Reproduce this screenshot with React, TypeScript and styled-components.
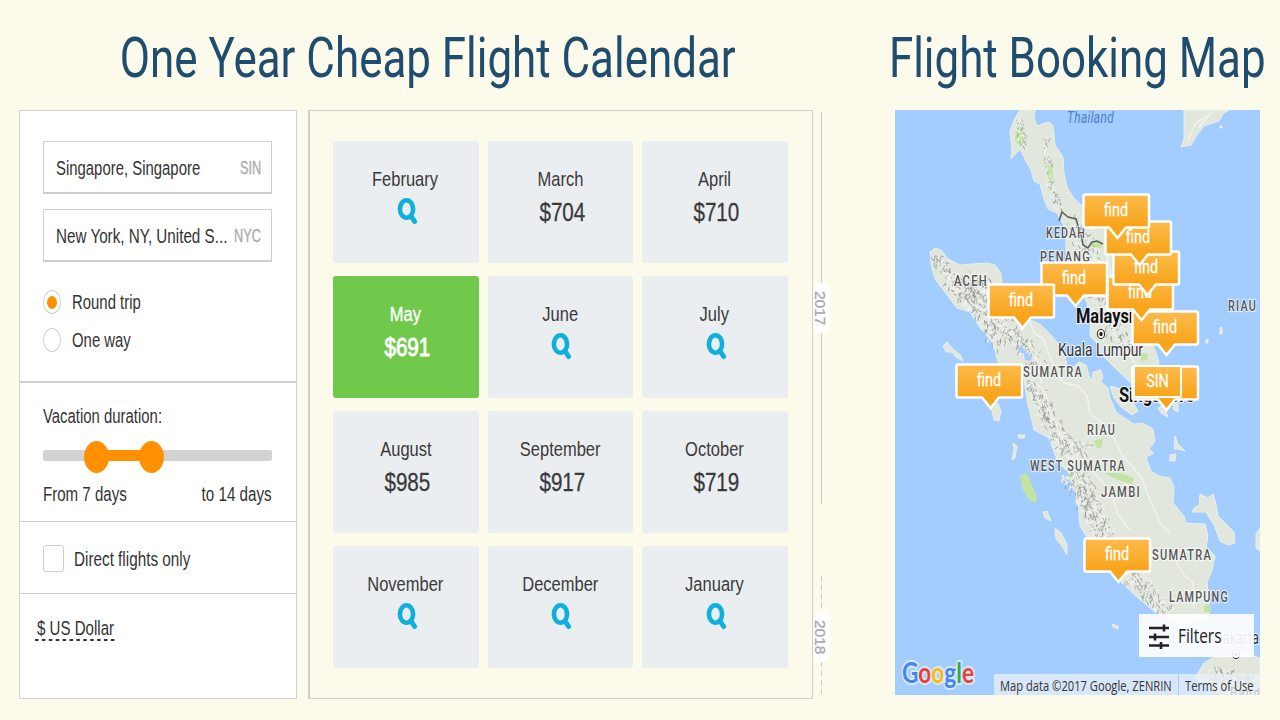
import * as React from "react";

import styled, { createGlobalStyle, css } from "styled-components";

const GlobalStyle = createGlobalStyle`
  body {
    margin: 0;
    background-color: #fcfaea;
    font-family: "Liberation Sans", Arial, sans-serif;
    color: #333;
  }

  * {
    box-sizing: border-box;
  }
`;

const Page = styled.div`
  display: flex;
  gap: 40px;
  width: 1280px;
  height: 720px;
  overflow: hidden;
  background-color: #fcfaea;
`;

const CalendarSection = styled.section`
  width: 855px;
`;

const MapSection = styled.section`
  width: 365px;
`;

const TitleBar = styled.header`
  display: flex;
  justify-content: center;
  height: 110px;
  padding-top: 25px;
`;

const Title = styled.h1`
  flex: none;
  margin: 0;
  font-family: Roboto, sans-serif;
  font-size: 56px;
  font-weight: 400;
  line-height: 66px;
  white-space: nowrap;
  color: #1f4d70;
  transform: scaleX(0.784);
`;

const Panels = styled.div`
  display: flex;
  height: 589px;
  padding-left: 19px;
`;

const SearchForm = styled.form`
  display: flex;
  flex-direction: column;
  width: 278px;
  margin-right: 11px;
  border: 1px solid #d2d2cf;
  background-color: #fff;
`;

const FormGroup = styled.div<{ $height?: number; $line?: number }>`
  ${(p) => (p.$height ? `height: ${p.$height}px;` : "flex: 1;")}
  padding: 0 24px 0 23px;
  border-bottom: ${(p) => p.$line || 0}px solid #cfcfcf;
`;

// narrow text: the glyphs are taller than they are wide
const Narrow = styled.span<{
  $from?: "left" | "center" | "right";
  $scale?: number;
}>`
  display: inline-block;
  font-size: 20.5px;
  line-height: 24px;
  white-space: nowrap;
  transform: scaleX(${(p) => p.$scale || 0.727});
  transform-origin: ${(p) => p.$from || "left"} center;
`;

const Fields = styled.div`
  padding: 30px 0 6px;
`;

const PlaceField = styled.div`
  display: flex;
  align-items: center;
  height: 53px;
  margin-bottom: 15px;
  padding: 1px 10px 0 12px;
  border: 1px solid #cfcfcf;
  border-bottom-width: 2px;
`;

const PlaceName = styled.div`
  flex: 1;
  width: 0;
`;

const PlaceCode = styled(Narrow)`
  flex: none;
  font-size: 17.5px;
  color: #aaa;
  -webkit-text-stroke: 0.3px;
`;

const RadioRow = styled.label`
  display: flex;
  align-items: center;
  gap: 11px;
  height: 38px;
`;

const Radio = styled.span`
  display: flex;
  align-items: center;
  justify-content: center;
  width: 18px;
  height: 24px;
  border: 1px solid #cfcfcf;
  border-radius: 50%;
`;

const RadioDot = styled.span`
  width: 10px;
  height: 13px;
  border-radius: 50%;
  background-color: #ff9000;
`;

const DurationLabel = styled(Narrow)`
  display: block;
  margin-top: 21px;
`;

const SliderTrack = styled.div`
  position: relative;
  height: 11px;
  margin: 22px 0 21px;
  border-radius: 2px;
  background-color: #d3d3d3;
`;

const SliderRange = styled.div`
  position: absolute;
  left: 53px;
  width: 56px;
  height: 11px;
  background-color: #ff9000;
`;

const SliderHandle = styled.div<{ $x: number }>`
  position: absolute;
  top: -9px;
  left: ${(p) => p.$x}px;
  width: 25px;
  height: 32px;
  border-radius: 50%;
  background-color: #ff9000;
`;

const Between = styled.div`
  display: flex;
  justify-content: space-between;
`;

const CheckRow = styled.label`
  display: flex;
  align-items: center;
  gap: 10px;
  height: 73px;
`;

const CheckBox = styled.span`
  width: 21px;
  height: 27px;
  border: 1px solid #cfcfcf;
  border-radius: 3px;
`;

const Currency = styled.div`
  width: 79px;
  height: 27px;
  margin: 22px 0 0 -8px;
`;

const CurrencyName = styled(Narrow)`
  margin-left: 2px;
`;

const DottedLine = styled.svg`
  display: block;
  margin-top: -1px;
`;

const Calendar = styled.div`
  display: grid;
  grid-template-columns: 146px 145px 146px;
  grid-template-rows: repeat(4, 122px);
  gap: 13px 9px;
  width: 505px;
  padding: 30px 0 0 23px;
  border: 1px solid #cfcfc9;
  border-left-width: 2px;
`;

const MonthTile = styled.div<{ $best?: boolean }>`
  display: flex;
  flex-direction: column;
  align-items: center;
  padding-top: 26px;
  border-radius: 3px;
  background-color: #ebeef1;
  color: #3a3a3a;

  ${(p) =>
    p.$best &&
    css`
      background-color: #70c94a;
      color: #fff;
      -webkit-text-stroke: 0.4px;
    `}
`;

const MonthName = styled(Narrow)`
  margin-right: 1px;
`;

const Price = styled(Narrow)<{ $bold?: boolean }>`
  margin: 7px 0 0 3px;
  font-size: 25.5px;
  line-height: 28px;
  -webkit-text-stroke: ${(p) => (p.$bold ? 0.9 : 0.3)}px;
`;

const Glass = styled.svg`
  margin: 6px 0 0 2px;
`;

const YearRail = styled.div`
  display: flex;
  flex-direction: column;
  width: 17px;
`;

const YearBlock = styled.div<{ $dashed?: boolean }>`
  display: flex;
  flex-direction: column;
  align-items: center;
  height: ${(p) => (p.$dashed ? 122 : 392)}px;
  margin-top: ${(p) => (p.$dashed ? 72 : 2)}px;
`;

const YearLine = styled.div<{ $dashed?: boolean }>`
  flex: 1;
  width: 1px;
  background: ${(p) =>
    p.$dashed
      ? "repeating-linear-gradient(#c9c9c2 0 5px, transparent 5px 9px)"
      : "#c9c9c2"};
`;

const YearPill = styled.div`
  display: flex;
  align-items: center;
  justify-content: center;
  width: 17px;
  height: 50px;
  padding-right: 3px;
  border-radius: 8px;
  background-color: #fff;
  color: #a8a8a8;
  font-size: 15.5px;
  line-height: 14px;
  writing-mode: vertical-rl;
  -webkit-text-stroke: 0.3px;
`;

const MapView = styled.div`
  position: relative;
  width: 365px;
  height: 585px;
  overflow: hidden;
  background-color: #a3ccff;
`;

const MapDrawing = styled.svg`
  display: block;
`;

const Pin = styled.div<{ $x: number; $y: number; $width?: number }>`
  position: absolute;
  left: ${(p) => p.$x - 895}px;
  top: ${(p) => p.$y - 110}px;
  width: ${(p) => p.$width || 68}px;
`;

const PinShape = styled.svg`
  display: block;
`;

const PinText = styled.span`
  position: absolute;
  inset: 4px 0 auto;
  display: flex;
  justify-content: center;
  font-family: Roboto, sans-serif;
  font-size: 18px;
  line-height: 26px;
  color: #fff;
  transform: scaleX(0.8);
  -webkit-text-stroke: 0.3px;
`;

const OriginBox = styled(Pin)`
  height: 33px;
  border: 2px solid #fff;
  border-radius: 2px;
  background: linear-gradient(#fdbb4b, #f8a51c);

  ${PinText} {
    top: 1px;
  }
`;

const FilterButton = styled.button`
  position: absolute;
  left: 244px;
  top: 504px;
  display: flex;
  align-items: center;
  gap: 9px;
  width: 115px;
  height: 43px;
  padding: 0 0 0 10px;
  border: 0;
  background-color: rgba(255, 255, 255, 0.9);
  color: #222;
  font-family: "Open Sans", sans-serif;
`;

const FilterText = styled(Narrow)`
  font-size: 20px;
`;

const Attribution = styled.div`
  position: absolute;
  left: 99px;
  bottom: 0;
  display: flex;
  align-items: center;
  width: 266px;
  height: 21px;
  background-color: rgba(235, 240, 248, 0.75);
  color: #333;
  font-family: "Open Sans", sans-serif;
`;

const AttributionPart = styled.div<{ $width: number }>`
  width: ${(p) => p.$width}px;
  height: 21px;
  padding-left: 6px;

  & + & {
    border-left: 1px solid #a3ccff;
  }
`;

const AttributionText = styled(Narrow)`
  font-size: 14.5px;
  line-height: 21px;
`;

interface IMonth {
  name: string;
  price?: number;
  best?: boolean;
}

const months: IMonth[] = [
  { name: "February" },
  { name: "March", price: 704 },
  { name: "April", price: 710 },
  { name: "May", price: 691, best: true },
  { name: "June" },
  { name: "July" },
  { name: "August", price: 985 },
  { name: "September", price: 917 },
  { name: "October", price: 719 },
  { name: "November" },
  { name: "December" },
  { name: "January" },
];

const pins = [
  { x: 1131, y: 310 },
  { x: 1106, y: 275 },
  { x: 1112, y: 250 },
  { x: 1104, y: 220 },
  { x: 1082, y: 193 },
  { x: 1040, y: 261 },
  { x: 987, y: 283 },
  { x: 955, y: 363 },
  { x: 1083, y: 537 },
];

interface ILabel {
  text: string;
  x: number;
  y: number;
  width: number;
}

const regions: ILabel[] = [
  { text: "KEDAH", x: 1046, y: 238, width: 40 },
  { text: "PENANG", x: 1040, y: 262, width: 51 },
  { text: "ACEH", x: 954, y: 286, width: 34 },
  { text: "SUMATRA", x: 1023, y: 377, width: 60 },
  { text: "RIAU", x: 1228, y: 311, width: 29 },
  { text: "RIAU", x: 1087, y: 435, width: 29 },
  { text: "WEST SUMATRA", x: 1030, y: 471, width: 96 },
  { text: "JAMBI", x: 1101, y: 497, width: 40 },
  { text: "SUMATRA", x: 1152, y: 560, width: 60 },
  { text: "LAMPUNG", x: 1169, y: 602, width: 60 },
];

const land = [
  // Malay peninsula
  "M1020 110 L1014 120 1010 131 1012 150 1011 159 1017 152 1021 150 1026 161 1031 170 1034 181 1040 184 1044 199 1048 209 1057 213 1062 222 1066 229 1066 250 1070 262 1078 285 1087 303 1091 320 1090 336 1096 342 1100 352 1107 360 1115 368 1130 382 1148 392 1160 398 1166 396 1162 378 1156 372 1159 362 1155 350 1149 338 1149 300 1149 270 1135 248 1120 244 1105 232 1094 218 1079 203 1073 197 1067 187 1064 174 1063 157 1055 145 1053 125 1048 122 1037 126 1034 118 1035 110Z",
  // Sumatra
  "M930 252 L935 248 941 250 948 259 960 265 972 264 988 263 995 265 1001 273 1002 285 1015 303 1026 318 1040 324 1051 335 1060 346 1064 352 1067 365 1073 368 1079 362 1086 365 1090 379 1100 381 1108 388 1110 398 1116 412 1126 419 1134 424 1143 423 1153 429 1155 441 1149 449 1154 453 1146 457 1151 471 1159 476 1170 478 1174 487 1173 503 1184 516 1186 523 1205 524 1208 536 1206 547 1215 556 1212 571 1207 582 1210 610 1206 622 1193 619 1185 628 1168 618 1155 612 1137 597 1122 583 1104 558 1089 540 1080 526 1079 512 1076 494 1069 473 1058 462 1054 452 1049 438 1034 430 1027 400 1024 379 1006 372 998 362 993 343 988 337 976 322 970 312 957 308 944 291 935 279 931 264Z",
  // Vietnam
  "M1184 110 L1184 139 1181 147 1191 145 1197 135 1204 126 1219 121 1223 114 1229 110Z",
  // Bangka and Belitung
  "M1200 494 L1208 498 1213 494 1216 504 1218 516 1227 525 1234 532 1235 543 1228 545 1220 541 1215 527 1206 512 1192 512 1194 508 1199 505Z",
  "M1260 528 L1256 534 1256 548 1260 551Z",
  // Java
  "M1195 678 L1204 663 1214 657 1230 657 1240 652 1260 658 1260 695 1222 695 1205 684Z",
  // small islands
  "M943 346 L947 342 953 349 961 356 963 361 956 357 952 352 946 352Z",
  "M991 407 L998 403 1001 412 999 421 994 420Z",
  "M1018 435 L1025 435 1024 438 1019 438Z",
  "M1013 443 L1017 446 1015 458 1012 460 1014 450Z",
  "M1043 512 L1047 511 1051 521 1045 518Z",
  "M1055 528 L1061 533 1067 544 1067 555 1062 546 1056 539Z",
  "M1112 624 L1118 626 1118 629 1113 627Z",
  "M1175 436 L1178 444 1185 451 1178 449 1174 449Z",
  "M1170 455 L1176 454 1175 461 1170 461Z",
  "M1158 408 L1164 406 1168 417 1162 414Z",
  "M1173 400 L1178 402 1178 412 1174 410Z",
  "M1220 126 L1222 126 1222 128 1220 128Z",
  "M1220 328 L1222 327 1222 334 1220 334Z",
  "M1206 340 L1208 339 1208 343 1206 343Z",
  "M1093 372 L1101 370 1103 378 1099 384 1092 380Z",
  "M1110 386 L1120 389 1130 398 1138 411 1132 415 1121 407 1114 398Z",
];

const forests = [
  "M1020 475 L1027 473 1037 497 1036 503 1029 500 1023 490Z",
  "M1016 130 L1023 127 1025 140 1019 145 1015 141Z",
  "M1047 167 L1052 164 1053 178 1049 183Z",
  "M1094 440 L1103 439 1101 449 1096 447Z",
  "M1104 473 L1120 473 1134 478 1132 484 1120 481Z",
  "M1140 354 L1147 353 1148 360 1141 361Z",
  "M1092 242 L1100 240 1102 248 1093 247Z",
  "M1204 605 L1210 604 1210 612 1204 612Z",
  "M1068 475 L1072 474 1075 484 1070 482Z",
];

const rivers = [
  "M1030 322 L1035 334 1043 338 1048 352 1056 372 1064 383 1078 386 1087 396 1090 414",
  "M1090 414 L1101 422 1115 440 1122 455 1142 478 1150 500 1160 522 1170 534",
  "M1053 446 L1070 458 1092 470 1104 484 1114 500 1118 515 1130 530",
  "M1175 560 L1184 575 1193 582 1194 610",
  "M1106 250 L1112 280 1105 310 1118 340 1140 370",
  "M1188 140 L1195 124 1206 116",
  "M1198 128 L1212 112",
];

interface IRidge {
  points: number[][];
  spread: number;
  count: number;
}

const ridges: IRidge[] = [
  { points: [[936, 256], [950, 276]], spread: 6, count: 45 },
  { points: [[952, 278], [972, 296], [990, 322], [1004, 342]], spread: 11, count: 190 },
  { points: [[968, 278], [986, 288], [1010, 318]], spread: 12, count: 120 },
  { points: [[1008, 330], [1022, 345], [1040, 372]], spread: 9, count: 70 },
  { points: [[1034, 382], [1046, 412], [1066, 446]], spread: 9, count: 120 },
  { points: [[1066, 446], [1082, 448]], spread: 11, count: 40 },
  { points: [[1072, 472], [1088, 500], [1106, 538]], spread: 11, count: 170 },
  { points: [[1124, 568], [1146, 588], [1168, 612]], spread: 9, count: 100 },
  { points: [[1018, 116], [1023, 146]], spread: 3, count: 22 },
  { points: [[1046, 135], [1052, 190], [1062, 212]], spread: 4, count: 40 },
  { points: [[1078, 222], [1090, 262], [1104, 310]], spread: 11, count: 100 },
  { points: [[1106, 318], [1126, 342]], spread: 10, count: 36 },
  { points: [[1214, 672], [1250, 682]], spread: 9, count: 60 },
];

// short relief strokes scattered along a ridge, always the same ones
const reliefPath = (ridge: IRidge, start: number) => {
  let seed = start * 7919 + 17;
  const next = () => {
    seed = (seed * 16807) % 2147483647;
    return seed / 2147483647;
  };
  let d = "";
  for (let i = 0; i < ridge.count; i++) {
    const at = next() * (ridge.points.length - 1);
    const index = Math.floor(at);
    const [x1, y1] = ridge.points[index];
    const [x2, y2] = ridge.points[index + 1];
    const x = x1 + (x2 - x1) * (at - index) + (next() - 0.5) * 2 * ridge.spread;
    const y = y1 + (y2 - y1) * (at - index) + (next() - 0.5) * 1.4 * ridge.spread;
    d += `M${x.toFixed(1)} ${y.toFixed(1)}l${(next() * 5 - 2).toFixed(1)} ${(
      next() * 6 - 1
    ).toFixed(1)}`;
  }
  return d;
};

const MapText = styled.text`
  font-family: Roboto, sans-serif;
  font-size: 14px;
  font-weight: 500;
  letter-spacing: 1.6px;
  fill: #555;
  stroke: rgba(255, 255, 255, 0.7);
  stroke-width: 2.5px;
  stroke-linejoin: round;
  paint-order: stroke;
`;

const CityText = styled(MapText)<{ $bold?: boolean }>`
  font-size: ${(p) => (p.$bold ? 19.5 : 17.5)}px;
  font-weight: ${(p) => (p.$bold ? 700 : 400)};
  letter-spacing: 0;
  fill: ${(p) => (p.$bold ? "#111" : "#333")};
`;

const SeaText = styled(MapText)`
  font-size: 16px;
  font-style: italic;
  font-weight: 400;
  letter-spacing: 0.5px;
  fill: #4d80c4;
  stroke: none;
`;

const LogoText = styled(MapText)`
  font-family: Lato, sans-serif;
  font-size: 29px;
  font-weight: 700;
  letter-spacing: 0;
  stroke: #d9e8fb;
  stroke-width: 4px;
`;

const City = ({ x, y }: { x: number; y: number }) => (
  <g>
    <ellipse cx={x} cy={y} rx={3.5} ry={4.5} fill="#fff" stroke="#222" />
    <ellipse cx={x} cy={y} rx={1.7} ry={2.3} fill="#222" />
  </g>
);

const SeaMap = () => (
  <MapDrawing width="365" height="585" viewBox="895 110 365 585">
    <g fill="#e2e7de" stroke="#eaefe9" strokeWidth="1" strokeLinejoin="round">
      {land.map((d) => (
        <path key={d} d={d} />
      ))}
    </g>
    <g fill="#c3e3a2">
      {forests.map((d) => (
        <path key={d} d={d} />
      ))}
    </g>
    <g fill="none" stroke="#f0f3ee" strokeWidth="1.4" strokeLinejoin="round">
      {rivers.map((d) => (
        <path key={d} d={d} />
      ))}
    </g>
    {ridges.map((ridge, i) => (
      <g key={i} fill="none">
        <path d={reliefPath(ridge, i + 40)} stroke="#f0f1ed" strokeWidth="1.6" />
        <path
          d={reliefPath(ridge, i + 1)}
          stroke="#868a84"
          strokeOpacity="0.75"
          strokeWidth="0.9"
        />
      </g>
    ))}
    <path d="M1018 347l4 -1 5 7 5 4 -2 4 -5 -1 -1 -6 -5 -2Z" fill="#a3ccff" />
    <path
      d="M1059 221l3 -9 6 5 8 2 3 10 3 10 1 6 5 3 4 -6 5 -1 6 3"
      fill="none"
      stroke="#5d605c"
      strokeWidth="1.6"
    />
    <SeaText x="1067" y="123" textLength="47" lengthAdjust="spacingAndGlyphs">
      Thailand
    </SeaText>
    {regions.map((label) => (
      <MapText
        key={label.text + label.x}
        x={label.x}
        y={label.y}
        textLength={label.width}
        lengthAdjust="spacingAndGlyphs"
      >
        {label.text}
      </MapText>
    ))}
    <CityText $bold x="1076" y="323" textLength="66" lengthAdjust="spacingAndGlyphs">
      Malaysia
    </CityText>
    <City x={1101} y={334} />
    <CityText x="1058" y="356" textLength="85" lengthAdjust="spacingAndGlyphs">
      Kuala Lumpur
    </CityText>
    <CityText $bold x="1119" y="402" textLength="75" lengthAdjust="spacingAndGlyphs">
      Singapore
    </CityText>
    <CityText x="1216" y="644" textLength="43" lengthAdjust="spacingAndGlyphs">
      Jakarta
    </CityText>
    <City x={1236} y={654} />
    <MapText x="1230" y="698" textLength="54" lengthAdjust="spacingAndGlyphs">
      Bandung
    </MapText>
    <LogoText x="902" y="683" textLength="72" lengthAdjust="spacingAndGlyphs">
      <tspan fill="#4285f4">G</tspan>
      <tspan fill="#ea4335">o</tspan>
      <tspan fill="#fbbc05">o</tspan>
      <tspan fill="#4285f4">g</tspan>
      <tspan fill="#34a853">l</tspan>
      <tspan fill="#ea4335">e</tspan>
    </LogoText>
  </MapDrawing>
);

const FarePin = ({ x, y }: { x: number; y: number }) => (
  <Pin $x={x} $y={y}>
    <PinShape width="69" height="49" viewBox="0 0 69 49">
      <defs>
        <linearGradient id="pinFill" x1="0" y1="0" x2="0" y2="1">
          <stop offset="0" stopColor="#fdbb4b" />
          <stop offset="0.7" stopColor="#f8a51c" />
        </linearGradient>
      </defs>
      <path
        d="M3 1.5H65.5A1.5 1.5 0 0 1 67 3V33A1.5 1.5 0 0 1 65.5 34.5H44L35.5 45 27 34.5H3A1.5 1.5 0 0 1 1.5 33V3A1.5 1.5 0 0 1 3 1.5Z"
        fill="url(#pinFill)"
        stroke="#fff"
        strokeWidth="2.5"
      />
    </PinShape>
    <PinText>find</PinText>
  </Pin>
);

const SearchIcon = () => (
  <Glass width="21" height="28" viewBox="0 0 21 28">
    <g fill="none" stroke="#0fb0dc">
      <ellipse cx="9.5" cy="12" rx="6.6" ry="8.8" strokeWidth="4.6" />
      <path d="M14 19L17.6 24.5" strokeWidth="5" strokeLinecap="round" />
    </g>
  </Glass>
);

const FilterIcon = () => (
  <svg width="20" height="26" viewBox="0 0 20 26" stroke="#222" fill="none">
    <path d="M0 5H20M0 14H20M0 22.5H20" strokeWidth="2.6" />
    <path d="M15 1.5V8.5M6 10.5V17.5M12 19V26" strokeWidth="2.6" />
  </svg>
);

const MonthItem = ({ name, price, best }: IMonth) => (
  <MonthTile $best={best}>
    <MonthName $from="center" $scale={0.805}>
      {name}
    </MonthName>
    {price ? (
      <Price $from="center" $scale={0.81} $bold={best}>
        ${price}
      </Price>
    ) : (
      <SearchIcon />
    )}
  </MonthTile>
);

const TripForm = () => (
  <SearchForm>
    <FormGroup $height={272} $line={2}>
      <Fields>
        <PlaceField>
          <PlaceName>
            <Narrow>Singapore, Singapore</Narrow>
          </PlaceName>
          <PlaceCode $from="right">SIN</PlaceCode>
        </PlaceField>
        <PlaceField>
          <PlaceName>
            <Narrow $scale={0.742}>New York, NY, United S...</Narrow>
          </PlaceName>
          <PlaceCode $from="right">NYC</PlaceCode>
        </PlaceField>
      </Fields>
      <RadioRow>
        <Radio>
          <RadioDot />
        </Radio>
        <Narrow>Round trip</Narrow>
      </RadioRow>
      <RadioRow>
        <Radio />
        <Narrow>One way</Narrow>
      </RadioRow>
    </FormGroup>
    <FormGroup $height={139} $line={1}>
      <DurationLabel>Vacation duration:</DurationLabel>
      <SliderTrack>
        <SliderRange />
        <SliderHandle $x={41} />
        <SliderHandle $x={96} />
      </SliderTrack>
      <Between>
        <Narrow $scale={0.735}>From 7 days</Narrow>
        <Narrow $scale={0.74} $from="right">
          to 14 days
        </Narrow>
      </Between>
    </FormGroup>
    <FormGroup $height={72} $line={1}>
      <CheckRow>
        <CheckBox />
        <Narrow $scale={0.745}>Direct flights only</Narrow>
      </CheckRow>
    </FormGroup>
    <FormGroup>
      <Currency>
        <CurrencyName $scale={0.735}>$ US Dollar</CurrencyName>
        <DottedLine width="80" height="2">
          <path d="M0 1H80" stroke="#333" strokeWidth="2" strokeDasharray="3.5 3.4" />
        </DottedLine>
      </Currency>
    </FormGroup>
  </SearchForm>
);

const App = () => {
  return (
    <Page>
      <GlobalStyle />
      <CalendarSection>
        <TitleBar>
          <Title>One Year Cheap Flight Calendar</Title>
        </TitleBar>
        <Panels>
          <TripForm />
          <Calendar>
            {months.map((month) => (
              <MonthItem key={month.name} {...month} />
            ))}
          </Calendar>
          <YearRail>
            <YearBlock>
              <YearLine />
              <YearPill>2017</YearPill>
              <YearLine />
            </YearBlock>
            <YearBlock $dashed>
              <YearLine $dashed />
              <YearPill>2018</YearPill>
              <YearLine $dashed />
            </YearBlock>
          </YearRail>
        </Panels>
      </CalendarSection>
      <MapSection>
        <TitleBar>
          <Title>Flight Booking Map</Title>
        </TitleBar>
        <MapView>
          <SeaMap />
          <FarePin x={1131} y={365} />
          <OriginBox $x={1133} $y={365} $width={49}>
            <PinText>SIN</PinText>
          </OriginBox>
          {pins.map((pin) => (
            <FarePin key={`${pin.x}-${pin.y}`} x={pin.x} y={pin.y} />
          ))}
          <FilterButton>
            <FilterIcon />
            <FilterText $scale={0.77}>Filters</FilterText>
          </FilterButton>
          <Attribution>
            <AttributionPart $width={184}>
              <AttributionText $scale={0.77}>
                Map data ©2017 Google, ZENRIN
              </AttributionText>
            </AttributionPart>
            <AttributionPart $width={82}>
              <AttributionText $scale={0.77}>Terms of Use</AttributionText>
            </AttributionPart>
          </Attribution>
        </MapView>
      </MapSection>
    </Page>
  );
};

export default App;
